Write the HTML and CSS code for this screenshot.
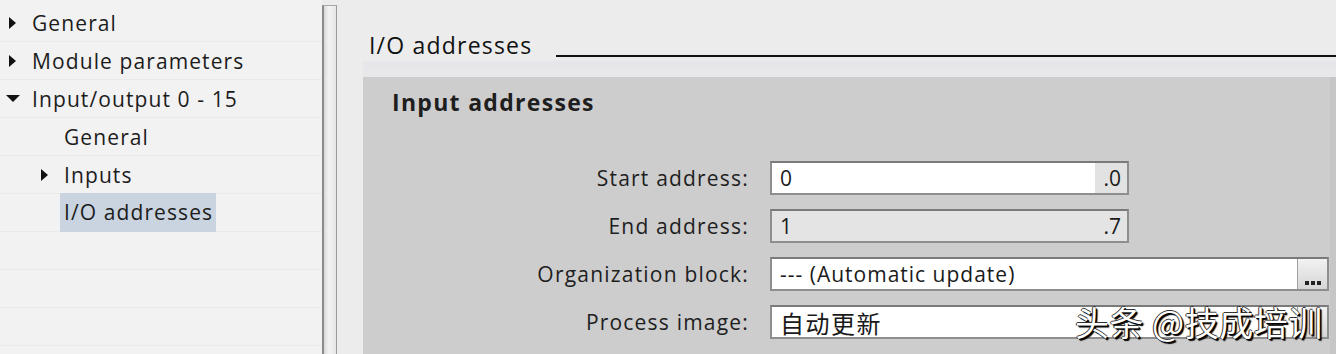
FILE: index.html
```html
<!DOCTYPE html>
<html>
<head>
<meta charset="utf-8">
<link rel="stylesheet" href="styles.css">
</head>
<body>
<div class="app">
  <nav class="nav">
    <div class="row"><span class="tri right"></span><span>General</span></div>
    <div class="row"><span class="tri right"></span><span>Module parameters</span></div>
    <div class="row"><span class="tri down"></span><span>Input/output 0 - 15</span></div>
    <div class="row l2"><span class="tri none"></span><span>General</span></div>
    <div class="row l2"><span class="tri right"></span><span>Inputs</span></div>
    <div class="row l2"><span class="tri none"></span><span class="sel">I/O addresses</span></div>
    <div class="row"></div>
    <div class="row"></div>
    <div class="row"></div>
  </nav>
  <div class="splitter"></div>
  <main class="main">
    <div class="sec-head">
      <span class="sec-title">I/O addresses</span>
      <span class="sec-line"></span>
    </div>
    <section class="panel">
      <h2 class="panel-title">Input addresses</h2>
      <div class="form">
        <div class="frow">
          <label class="lbl">Start address:</label>
          <div class="field short"><span class="val">0</span><span class="suffix">.0</span></div>
        </div>
        <div class="frow">
          <label class="lbl">End address:</label>
          <div class="field short disabled"><span class="val">1</span><span class="suffix plain">.7</span></div>
        </div>
        <div class="frow">
          <label class="lbl">Organization block:</label>
          <div class="field long"><span class="val">--- (Automatic update)</span><span class="btn"><i></i><i></i><i></i></span></div>
        </div>
        <div class="frow">
          <label class="lbl">Process image:</label>
          <div class="field long"><span class="val cjk">自动更新</span><span class="btn"></span></div>
        </div>
      </div>
    </section>
  </main>
  <div class="watermark">头条 @技成培训</div>
</div>
</body>
</html>
```
FILE: styles.css
```css
html, body {
  margin: 0;
  padding: 0;
}
body {
  width: 1336px;
  height: 354px;
  overflow: hidden;
  background: #ececec;
  font-family: "Open Sans", "Noto Sans", "Noto Sans CJK SC", sans-serif;
  color: #1a1a1a;
}
.app {
  position: relative;
  display: flex;
  height: 354px;
}
.nav {
  width: 322px;
  flex: none;
  background: #f2f2f2;
  padding-top: 4px;
}
.row {
  height: 37px;
  border-bottom: 1px solid #eaeaea;
  display: flex;
  align-items: center;
  font-size: 21px;
  letter-spacing: 1.1px;
  color: #1c1c1c;
}
.row.l2 {
  padding-left: 32px;
}
.tri {
  width: 32px;
  height: 12px;
  flex: none;
  display: flex;
  align-items: center;
  justify-content: flex-start;
  padding-left: 9px;
  box-sizing: border-box;
}
.tri.right::before {
  content: "";
  border-left: 7px solid #111;
  border-top: 6px solid transparent;
  border-bottom: 6px solid transparent;
}
.tri.down::before {
  content: "";
  margin-left: -3px;
  border-top: 7px solid #111;
  border-left: 7px solid transparent;
  border-right: 7px solid transparent;
}
.sel {
  background: #c9d4e0;
  padding: 5px 3px 6px 4px;
  margin-left: -4px;
}
.splitter {
  width: 12px;
  flex: none;
  margin-top: 5px;
  border-left: 2px solid #8c8c8c;
  border-right: 1px solid #9a9a9a;
  border-top: 1px solid #a8a8a8;
  background: linear-gradient(90deg, #d8d8d8, #f4f4f4 40%, #e6e6e6);
}
.main {
  flex: 1;
  display: flex;
  flex-direction: column;
  padding-left: 26px;
  min-width: 0;
}
.sec-head {
  height: 77px;
  display: flex;
  align-items: flex-start;
  box-sizing: border-box;
  padding-top: 30px;
  background: linear-gradient(180deg, #ececec 0, #ececec 60px, #e6e6ea 62px, #e9e9ec 77px);
}
.sec-title {
  font-size: 23px;
  letter-spacing: 1.2px;
  margin-left: 6px;
  color: #111;
  line-height: 30px;
}
.sec-line {
  flex: 1;
  height: 2px;
  background: #111;
  margin-top: 25px;
  margin-left: 24px;
}
.panel {
  flex: 1;
  background: #cdcdcd;
  border-right: 6px solid #c6c6c6;
  padding-left: 29px;
}
.panel-title {
  margin: 0;
  font-size: 23px;
  font-weight: 700;
  letter-spacing: 1.3px;
  line-height: 30px;
  padding-top: 10px;
  color: #1e1e1e;
}
.form {
  margin-top: 44px;
  display: flex;
  flex-direction: column;
  gap: 14px;
}
.frow {
  display: flex;
  align-items: center;
  height: 34px;
}
.lbl {
  width: 357px;
  flex: none;
  text-align: right;
  font-size: 21px;
  letter-spacing: 1.2px;
  color: #1e1e1e;
  margin-right: 21px;
}
.field {
  height: 34px;
  box-sizing: border-box;
  border: 2px solid #8e8e8e;
  border-top-color: #7a7a7a;
  background: #fff;
  display: flex;
  align-items: center;
  font-size: 21px;
}
.field.short { width: 359px; }
.field.long { width: 559px; }
.field.disabled { background: #e4e4e4; }
.val {
  flex: 1;
  padding-left: 8px;
  letter-spacing: 1px;
  color: #1a1a1a;
}
.val.cjk {
  font-family: "Noto Sans CJK SC", sans-serif;
  font-size: 24px;
  letter-spacing: 1.5px;
}
.suffix {
  width: 32px;
  height: 100%;
  display: flex;
  align-items: center;
  justify-content: flex-end;
  padding-right: 6px;
  box-sizing: border-box;
  background: #e2e2e2;
}
.suffix.plain { background: transparent; }
.btn {
  width: 30px;
  height: 100%;
  border-left: 1px solid #a0a0a0;
  background: linear-gradient(180deg, #f2f2f2, #d6d6d6);
  display: flex;
  align-items: flex-end;
  justify-content: center;
  gap: 2px;
  padding-bottom: 4px;
  box-sizing: border-box;
}
.btn i {
  width: 4px;
  height: 4px;
  background: #222;
}
.watermark {
  position: absolute;
  left: 1075px;
  top: 300px;
  font-family: "Noto Sans CJK SC", sans-serif;
  font-size: 34px;
  line-height: 44px;
  color: #fff;
  letter-spacing: 0.5px;
  text-shadow: 1px 1px 0 #000, -1px 0 0 #333, 0 -1px 0 #333, 2px 2px 1px #000;
}
```
